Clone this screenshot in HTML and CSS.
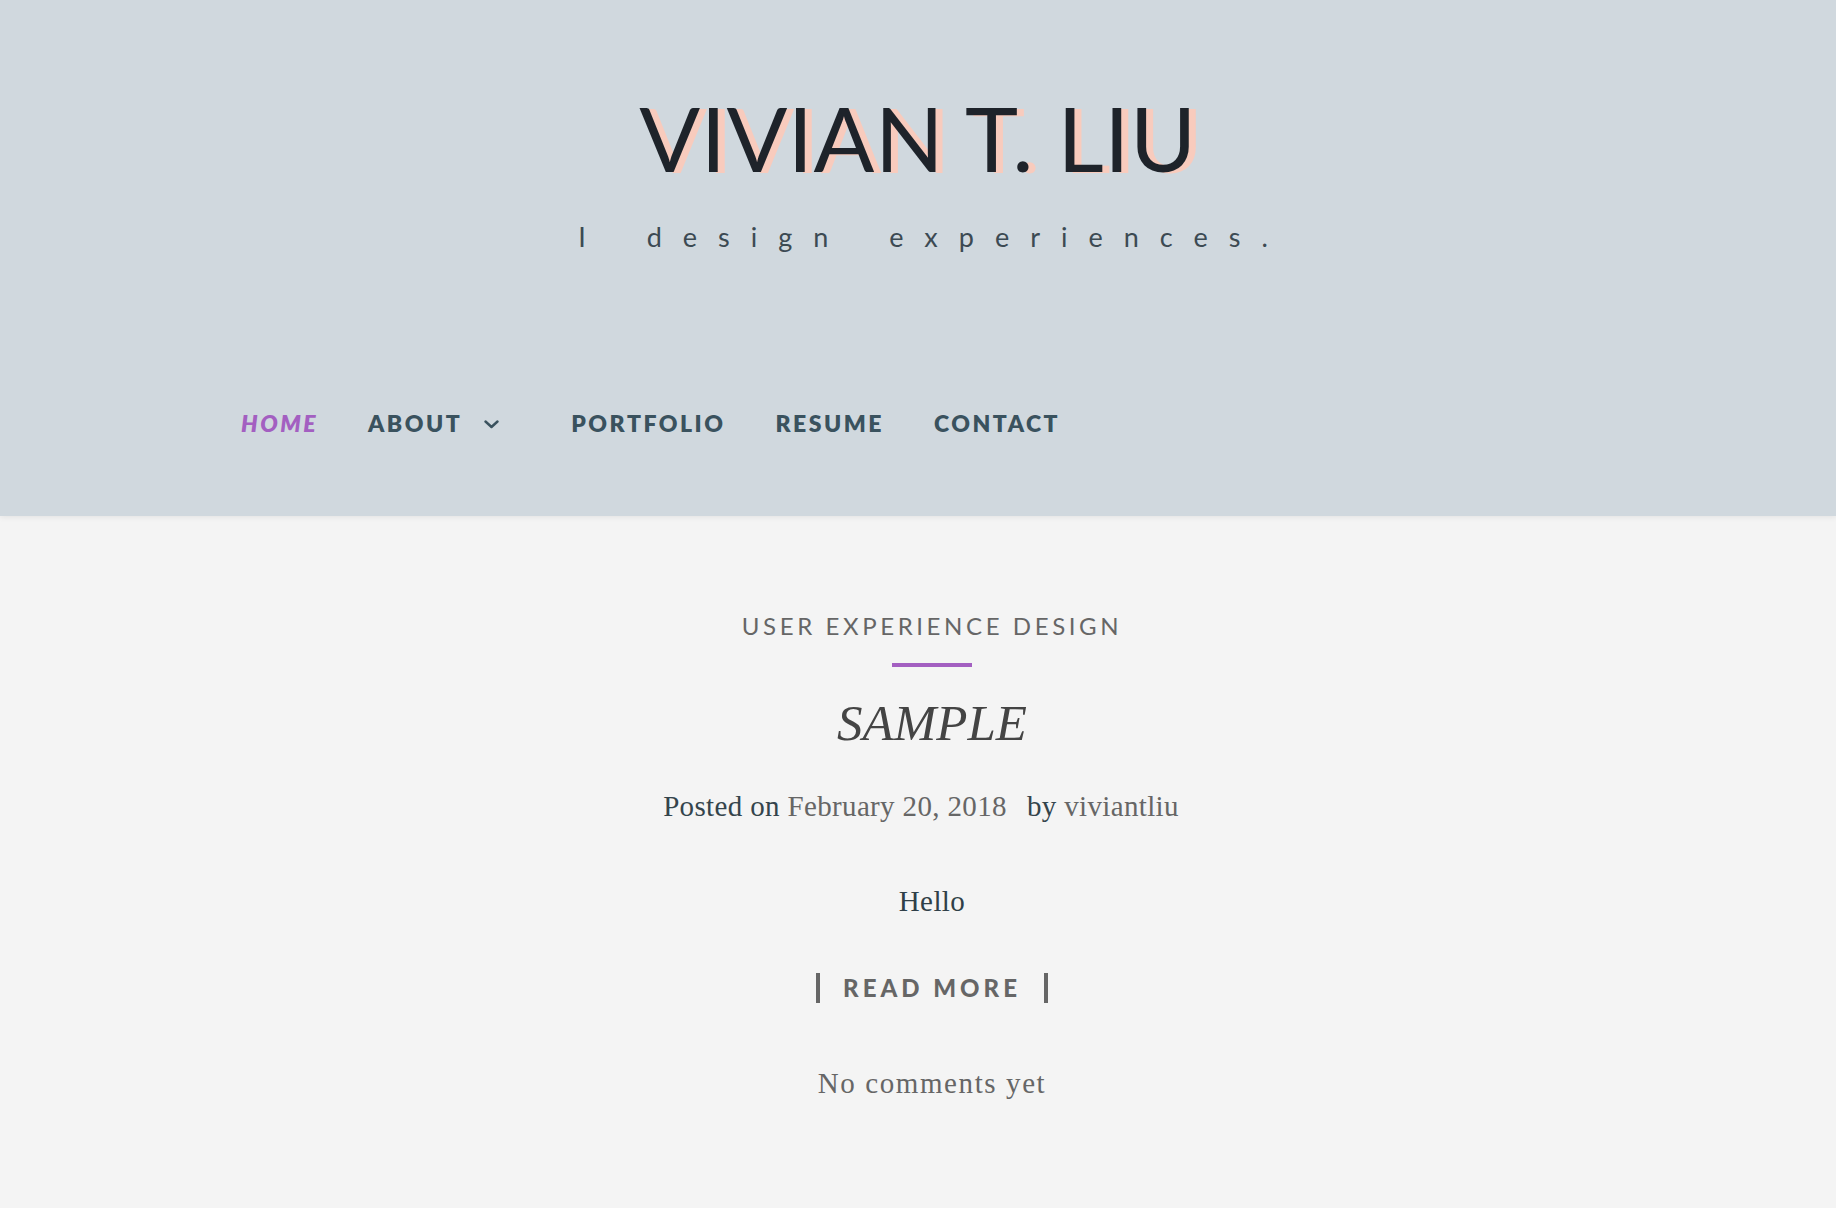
FILE: index.html
```html
<!DOCTYPE html>
<html lang="en">
<head>
<meta charset="utf-8">
<title>Vivian T. Liu</title>
<link rel="stylesheet" href="styles.css">
</head>
<body>
<header class="site-header">
  <div class="branding">
    <h1 class="site-title">VIVIAN T. LIU</h1>
    <p class="site-tagline">I design experiences.</p>
  </div>
  <nav class="main-nav">
    <a class="nav-item active" href="#">HOME</a>
    <a class="nav-item has-sub" href="#">ABOUT
      <svg class="chev" width="15" height="9" viewBox="0 0 15 9"><path d="M1.5 1.5 L7.5 7 L13.5 1.5" fill="none" stroke="#3a525e" stroke-width="2.4" stroke-linecap="round" stroke-linejoin="round"/></svg>
    </a>
    <a class="nav-item" href="#">PORTFOLIO</a>
    <a class="nav-item" href="#">RESUME</a>
    <a class="nav-item" href="#">CONTACT</a>
  </nav>
</header>
<main class="content">
  <article class="post">
    <div class="post-cat">USER EXPERIENCE DESIGN</div>
    <div class="post-rule"></div>
    <h2 class="post-title">SAMPLE</h2>
    <div class="post-meta"><span class="dark">Posted on</span> <span class="muted">February 20, 2018</span><span class="by dark">by</span> <span class="muted">viviantliu</span></div>
    <p class="post-body">Hello</p>
    <div class="read-more-wrap"><a class="read-more" href="#">READ MORE</a></div>
    <div class="comments">No comments yet</div>
  </article>
</main>
</body>
</html>
```

FILE: styles.css
```css
html, body {
  margin: 0;
  padding: 0;
}
body {
  background: #f4f4f4;
  font-family: "Lato", "Liberation Sans", sans-serif;
  min-height: 1208px;
}
.site-header {
  background: #d0d8de;
  height: 516px;
  box-sizing: border-box;
  padding-top: 92px;
  box-shadow: 0 1px 6px rgba(0,0,0,0.08);
  position: relative;
}
.branding {
  text-align: center;
}
.site-title {
  margin: 0;
  font-family: "Lato", sans-serif;
  font-weight: 400;
  font-size: 90px;
  line-height: 90px;
  letter-spacing: 0.5px;
  color: #1e232a;
  text-shadow: 7px 1px 0 #f8cbbd;
}
.site-tagline {
  margin: 41px 0 0;
  font-family: "Lato", sans-serif;
  font-weight: 400;
  font-size: 27px;
  line-height: 27px;
  letter-spacing: 21px;
  word-spacing: 12px;
  color: #3c4a53;
  padding-left: 31px;
}
.main-nav {
  display: flex;
  align-items: center;
  gap: 50px;
  margin-top: 162px;
  padding-left: 241px;
}
.nav-item {
  font-family: "Lato", sans-serif;
  font-weight: 800;
  font-size: 23px;
  line-height: 23px;
  letter-spacing: 2.5px;
  color: #3a525e;
  text-decoration: none;
  display: flex;
  align-items: center;
}
.nav-item.active {
  color: #a35fc1;
  font-style: italic;
}
.nav-item.has-sub {
  padding-right: 22px;
}
.chev {
  margin-left: 22px;
  margin-top: 2px;
}
.content {
  padding-left: 28px;
  padding-top: 98px;
}
.post {
  text-align: center;
}
.post-cat {
  font-family: "Lato", sans-serif;
  font-weight: 400;
  font-size: 24px;
  line-height: 23px;
  letter-spacing: 3.6px;
  color: #666;
}
.post-rule {
  width: 80px;
  height: 4px;
  background: #a35fc1;
  margin: 26px auto 0;
}
.post-title {
  margin: 30px 0 0;
  font-family: "Liberation Serif", serif;
  font-style: italic;
  font-weight: 400;
  font-size: 51px;
  line-height: 52px;
  color: #444;
}
.post-meta {
  margin-top: 42px;
  padding-right: 22px;
  font-family: "Liberation Serif", serif;
  font-size: 29px;
  line-height: 30px;
  letter-spacing: 0.35px;
}
.dark { color: #34444c; }
.muted { color: #666; }
.by { margin-left: 20px; }
.post-body {
  margin: 65px 0 0;
  font-family: "Liberation Serif", serif;
  font-size: 29px;
  line-height: 30px;
  letter-spacing: 0.4px;
  color: #2f3f48;
}
.read-more-wrap {
  margin-top: 57px;
}
.read-more {
  display: inline-block;
  border-left: 4px solid #666;
  border-right: 4px solid #666;
  padding: 3px 23px;
  font-family: "Lato", sans-serif;
  font-weight: 900;
  font-size: 24px;
  line-height: 24px;
  letter-spacing: 4px;
  color: #666;
  text-decoration: none;
}
.comments {
  margin-top: 65px;
  font-family: "Liberation Serif", serif;
  font-size: 29px;
  line-height: 30px;
  letter-spacing: 1.6px;
  color: #666;
}
```
